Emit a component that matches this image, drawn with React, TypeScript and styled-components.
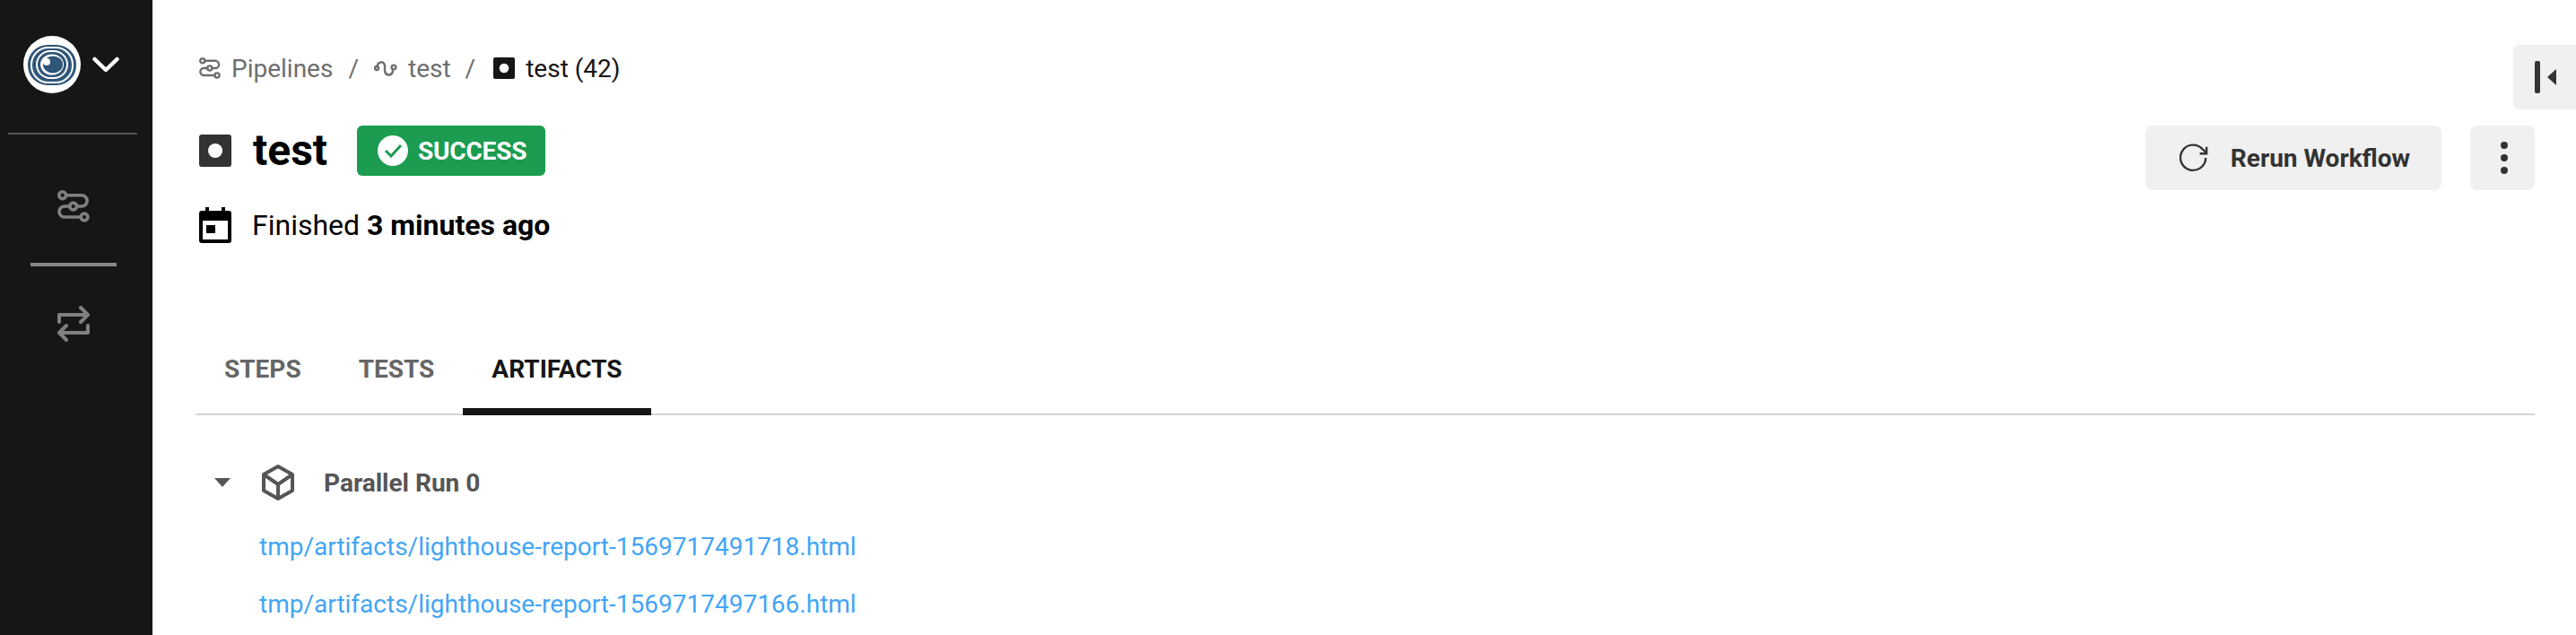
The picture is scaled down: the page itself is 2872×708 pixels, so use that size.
import React from "react";
import styled, { createGlobalStyle } from "styled-components";

const Global = createGlobalStyle`
  html, body { margin: 0; padding: 0; background: #fff; height: 100%; overflow: hidden; }
  body { font-family: Roboto, "Liberation Sans", sans-serif; }
  #root { height: 708px; }
  * { box-sizing: border-box; }
`;

const Page = styled.div`
  display: flex;
  width: 2872px;
  height: 708px;
  overflow: hidden;
  position: relative;
`;

const Sidebar = styled.nav`
  width: 170px;
  flex: none;
  background: #161616;
  display: flex;
  flex-direction: column;
  align-items: center;
`;

const LogoRow = styled.div`
  width: 100%;
  height: 148px;
  padding: 40px 0 0 26px;
  display: flex;
  align-items: flex-start;
  gap: 13px;
`;

const Chevron = styled.svg`
  margin-top: 23px;
`;

const SideRule = styled.div`
  width: 144px;
  height: 2px;
  background: #555;
  margin-left: -8px;
`;

const NavIcon = styled.svg<{ $top: number }>`
  margin-top: ${(p) => p.$top}px;
  margin-left: -6px;
  display: block;
`;

const NavRule = styled.div`
  width: 96px;
  height: 4px;
  background: #888;
  margin: 45px 0 0 -6px;
`;

const Main = styled.main`
  flex: 1;
  min-width: 0;
  padding: 53px 52px 0 48px;
  display: flex;
  flex-direction: column;
`;

const Crumbs = styled.div`
  display: flex;
  align-items: center;
  height: 46px;
  padding-left: 4px;
  font-size: 28px;
  color: #6e6e6e;
`;

const Crumb = styled.span<{ $current?: boolean }>`
  display: inline-flex;
  align-items: center;
  gap: 12px;
  color: ${(p) => (p.$current ? "#161616" : "#6e6e6e")};
`;

const Slash = styled.span<{ $before: number; $after: number }>`
  margin: 0 ${(p) => p.$after}px 0 ${(p) => p.$before}px;
`;

const HeaderRow = styled.div`
  display: flex;
  justify-content: space-between;
  align-items: flex-start;
  margin-top: 41px;
`;

const TitleBlock = styled.div`
  display: flex;
  flex-direction: column;
`;

const TitleRow = styled.div`
  display: flex;
  align-items: center;
  height: 56px;
  padding-left: 4px;
`;

const Title = styled.h1`
  margin: 0 33px 0 24px;
  font-size: 48px;
  font-weight: 700;
  color: #000;
  line-height: 56px;
`;

const Badge = styled.div`
  display: flex;
  align-items: center;
  gap: 11px;
  height: 56px;
  width: 210px;
  padding-left: 23px;
  background: #1b9c50;
  border-radius: 6px;
  color: #fff;
  font-size: 28px;
  font-weight: 700;
  letter-spacing: -0.2px;
`;

const FinishedRow = styled.div`
  display: flex;
  align-items: center;
  gap: 23px;
  margin-top: 34px;
  padding-left: 4px;
  height: 42px;
  font-size: 32px;
  color: #000;
  strong { font-weight: 700; }
`;

const Actions = styled.div`
  display: flex;
  gap: 32px;
  margin-right: -6px;
`;

const Button = styled.button`
  height: 72px;
  border: 0;
  border-radius: 8px;
  background: #f0f0f0;
  color: #333;
  font-family: inherit;
  font-size: 28px;
  font-weight: 700;
  display: flex;
  align-items: center;
  justify-content: center;
  padding: 0;
`;

const RerunButton = styled(Button)`
  width: 330px;
  gap: 25px;
  padding-left: 3px;
`;

const MoreButton = styled(Button)`
  width: 72px;
  padding-left: 4px;
`;

const CollapseButton = styled(Button)`
  position: absolute;
  top: 50px;
  right: 0;
  width: 70px;
  padding-left: 2px;
  border-radius: 6px 0 0 6px;
`;

const Tabs = styled.div`
  display: flex;
  margin-top: 95px;
  height: 96px;
  border-bottom: 2px solid #d4d4d4;
  margin-right: -6px;
`;

const Tab = styled.div<{ $active?: boolean }>`
  height: 96px;
  padding: 0 32px;
  display: flex;
  align-items: center;
  font-size: 28px;
  font-weight: 700;
  color: ${(p) => (p.$active ? "#161616" : "#666")};
  border-bottom: 8px solid ${(p) => (p.$active ? "#161616" : "transparent")};
  margin-bottom: -2px;
`;

const Group = styled.section`
  display: flex;
  flex-direction: column;
  padding-top: 55px;
`;

const GroupHeader = styled.div`
  display: flex;
  align-items: center;
  height: 40px;
  padding-left: 21px;
  margin-bottom: 9px;
  font-size: 28px;
  font-weight: 700;
  color: #555;
`;

const GroupName = styled.span`
  margin-left: 33px;
`;

const BoxIcon = styled.svg`
  margin-left: 33px;
`;

const Link = styled.a`
  display: block;
  margin: 22px 0 0 71px;
  height: 42px;
  line-height: 42px;
  font-size: 28px;
  color: #42a5f5;
  text-decoration: none;
`;

const PipelinesIcon = ({ size, color, top }: { size: number; color: string; top?: number }) => {
  const props = { width: size, height: size, viewBox: "0 0 36 36", fill: "none", stroke: color, strokeWidth: size < 30 ? 3.6 : 3.6 } as const;
  const body = (
    <>
      <circle cx="5.7" cy="5.7" r="3.9" />
      <circle cx="17.7" cy="18" r="3.9" />
      <circle cx="30" cy="30" r="3.9" />
      <path d="M9.6 5.7H27a6.1 6.1 0 0 1 0 12.3h-5.4M13.8 18H8a6 6 0 0 0 0 12h18" strokeLinecap="round" />
    </>
  );
  return top !== undefined ? <NavIcon $top={top} {...props}>{body}</NavIcon> : <svg {...props}>{body}</svg>;
};

const CommitDot = ({ size, bg }: { size: number; bg: string }) => (
  <svg width={size} height={size} viewBox="0 0 36 36">
    <rect width="36" height="36" rx="3" fill={bg} />
    <circle cx="18" cy="18" r="8" fill="#fff" />
  </svg>
);

export default function App() {
  return (
    <Page>
      <Global />
      <Sidebar>
        <LogoRow>
          <svg width="64" height="64" viewBox="0 0 64 64">
            <circle cx="32" cy="32" r="32" fill="#fff" />
            <rect x="5" y="10" width="54" height="45" rx="22" fill="#2f5577" />
            <rect x="9" y="13" width="46" height="39" rx="19" fill="none" stroke="#fff" strokeWidth="2" />
            <rect x="15" y="17" width="34" height="30" rx="15" fill="none" stroke="#fff" strokeWidth="2" />
            <ellipse cx="32" cy="32" rx="13" ry="11.5" fill="#fff" />
            <ellipse cx="33" cy="32" rx="11" ry="9.5" fill="#2f5577" />
            <circle cx="26" cy="29" r="4" fill="#fff" />
          </svg>
          <Chevron width="30" height="18" viewBox="0 0 30 18" fill="none">
            <path d="M2.5 3L15 15 27.5 3" stroke="#fff" strokeWidth="4.5" strokeLinecap="round" strokeLinejoin="round" />
          </Chevron>
        </LogoRow>
        <SideRule />
        <PipelinesIcon size={36} color="#808080" top={62} />
        <NavRule />
        <NavIcon $top={44} width="36" height="40" viewBox="0 0 36 40" fill="none" stroke="#808080" strokeWidth="4" strokeLinecap="round" strokeLinejoin="round">
          <path d="M2 18v-8h32M26 2l8 8-8 8" />
          <path d="M34 22v8H2M10 22l-8 8 8 8" />
        </NavIcon>
      </Sidebar>
      <Main>
        <Crumbs>
          <Crumb>
            <PipelinesIcon size={24} color="#6e6e6e" />
            Pipelines
          </Crumb>
          <Slash $before={17} $after={17}>/</Slash>
          <Crumb>
            <svg width="26" height="20" viewBox="0 0 26 20" fill="none" stroke="#6e6e6e" strokeWidth="2.4" strokeLinecap="round">
              <circle cx="3" cy="10" r="2" />
              <path d="M3.5 8C4 3 11 1 12 7v6c1 6 8 6 9 0" />
              <circle cx="22" cy="9" r="2.4" />
            </svg>
            test
          </Crumb>
          <Slash $before={16} $after={20}>/</Slash>
          <Crumb $current>
            <CommitDot size={24} bg="#161616" />
            test (42)
          </Crumb>
        </Crumbs>
        <HeaderRow>
          <TitleBlock>
            <TitleRow>
              <CommitDot size={36} bg="#333" />
              <Title>test</Title>
              <Badge>
                <svg width="34" height="34" viewBox="0 0 34 34" fill="none">
                  <circle cx="17" cy="17" r="17" fill="#fff" />
                  <path d="M9 17l6 6L26 11" stroke="#1b9c50" strokeWidth="3" />
                </svg>
                SUCCESS
              </Badge>
            </TitleRow>
            <FinishedRow>
              <svg width="36" height="40" viewBox="0 0 36 40">
                <path fillRule="evenodd" fill="#000" d="M7 0h4v4h14V0h4v4h4a3 3 0 0 1 3 3v30a3 3 0 0 1-3 3H3a3 3 0 0 1-3-3V7a3 3 0 0 1 3-3h4V0zM4 15v21h28V15H4z" />
                <rect x="8" y="20" width="10" height="9" fill="#000" />
              </svg>
              <span>
                Finished <strong>3 minutes ago</strong>
              </span>
            </FinishedRow>
          </TitleBlock>
          <Actions>
            <RerunButton>
              <svg width="32" height="32" viewBox="0 0 34 34" fill="none" stroke="#333" strokeWidth="2.5">
                <path d="M31 17A15 15 0 1 1 27 6.5L32 11" />
                <path d="M32 4v8h-8" />
              </svg>
              Rerun Workflow
            </RerunButton>
            <MoreButton>
              <svg width="8" height="40" viewBox="0 0 8 40" fill="#333">
                <circle cx="4" cy="6" r="4" />
                <circle cx="4" cy="20" r="4" />
                <circle cx="4" cy="34" r="4" />
              </svg>
            </MoreButton>
          </Actions>
        </HeaderRow>
        <CollapseButton>
          <svg width="24" height="36" viewBox="0 0 24 36" fill="#333">
            <rect x="0" y="0" width="6" height="36" rx="2" />
            <path d="M24 9v18l-10-9z" />
          </svg>
        </CollapseButton>
        <Tabs>
          <Tab>STEPS</Tab>
          <Tab>TESTS</Tab>
          <Tab $active>ARTIFACTS</Tab>
        </Tabs>
        <Group>
          <GroupHeader>
            <svg width="20" height="10" viewBox="0 0 20 10" fill="#555">
              <path d="M0 0h18L9 10z" />
            </svg>
            <BoxIcon width="36" height="40" viewBox="0 0 36 40" fill="none" stroke="#555" strokeWidth="4" strokeLinejoin="round">
              <path d="M18 2l16 9v18l-16 9-16-9V11z" />
              <path d="M2 11l16 11 16-11M18 22v16" />
            </BoxIcon>
            <GroupName>Parallel Run 0</GroupName>
          </GroupHeader>
          <Link>tmp/artifacts/lighthouse-report-1569717491718.html</Link>
          <Link>tmp/artifacts/lighthouse-report-1569717497166.html</Link>
        </Group>
      </Main>
    </Page>
  );
}
